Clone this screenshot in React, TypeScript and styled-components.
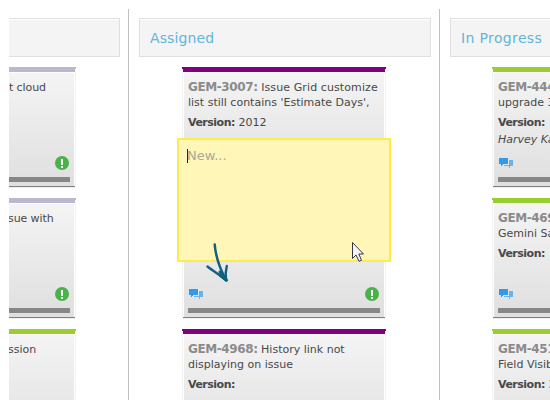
import React from "react";
import styled, { createGlobalStyle } from "styled-components";

const GlobalStyle = createGlobalStyle`
  body {
    margin: 0;
    background: #fff;
    font-family: "DejaVu Sans", Verdana, sans-serif;
    color: #484848;
    overflow: hidden;
  }
`;

const Page = styled.main`
  position: relative;
  box-sizing: border-box;
  width: 550px;
  height: 400px;
  padding: 9px 0 0 9px;
  overflow: hidden;
`;

const Board = styled.div`
  display: flex;
  height: 391px;
  overflow: hidden;
`;

const Column = styled.section<{ $pull?: number }>`
  box-sizing: border-box;
  flex: 0 0 311px;
  height: 391px;
  margin-left: ${(p) => -(p.$pull ?? 0)}px;
  padding: 9px 8px 0 10px;
  border-left: 1px solid #c0c0c0;
`;

const ColumnHeader = styled.h2<{ $spacing?: number }>`
  box-sizing: border-box;
  height: 39px;
  margin: 0 0 10px;
  padding: 0 10px;
  border: 1px solid #dfdfdf;
  background: #f4f4f4;
  box-shadow: inset 0 1px #fff;
  color: #62b5db;
  font-size: 14px;
  font-weight: 400;
  line-height: 38px;
  letter-spacing: ${(p) => p.$spacing ?? 0}px;
  white-space: nowrap;
`;

const Cards = styled.div<{ $inset: number }>`
  display: flex;
  flex-direction: column;
  gap: 10px;
  width: 204px;
  margin-left: ${(p) => p.$inset}px;
`;

const CardFrame = styled.article`
  flex: none;
  height: 121px;
`;

const Stripe = styled.div<{ $color: string }>`
  height: 3px;
  margin: 0 1px;
  padding-bottom: 2px;
  background: ${(p) => p.$color};
  &::before {
    content: "";
    display: block;
    height: 2px;
    margin: 0 -1px;
    background: ${(p) => p.$color};
  }
`;

const CardBody = styled.div`
  box-sizing: border-box;
  display: flex;
  flex-direction: column;
  height: 114px;
  padding: 7px 4px 4px;
  border: 1px solid #fff;
  border-bottom: 0;
  margin: 0 1px;
  background: linear-gradient(#f4f4f4, #dfdfdf) padding-box;
  box-shadow: -1px 0 #f2f2f2, 1px 0 #f2f2f2, 0 1px #808080, 0 2px #efefef;
`;

const Line = styled.div<{ $indent?: number; $spacing?: number }>`
  height: 15px;
  padding-left: ${(p) => p.$indent ?? 0}px;
  font-size: 11px;
  line-height: 15px;
  letter-spacing: ${(p) => p.$spacing ?? 0}px;
  white-space: nowrap;
`;

const IssueKey = styled.strong`
  color: #8b8b8b;
  font-size: 12px;
  letter-spacing: -0.4px;
`;

const Meta = styled(Line)`
  margin-top: 5px;
  strong {
    letter-spacing: -0.5px;
  }
`;

const Assignee = styled(Line)`
  margin-top: 2px;
  font-style: italic;
`;

const CardFooter = styled.footer`
  display: flex;
  justify-content: space-between;
  align-items: center;
  height: 14px;
  margin: auto 1px 7px;
`;

const Progress = styled.div`
  flex: none;
  height: 5px;
  background: #878787;
`;

const Composer = styled.div`
  position: absolute;
  left: 177px;
  top: 138px;
  box-sizing: border-box;
  width: 214px;
  height: 124px;
  padding: 8px;
  border: 2px solid #ffeb50;
  background: #fff6b8;
  color: #aaa69c;
  font-size: 13px;
  line-height: 15px;
`;

const Caret = styled.span`
  display: inline-block;
  width: 1px;
  height: 14px;
  margin-right: -1px;
  background: #222;
  vertical-align: -3px;
`;

const Overlay = styled.svg<{ $x: number; $y: number }>`
  position: absolute;
  left: ${(p) => p.$x}px;
  top: ${(p) => p.$y}px;
`;

const ChatIcon = () => (
  <svg width="14" height="10" viewBox="0 0 14 10" shapeRendering="crispEdges">
    <path fill="#6bb1ea" d="M10 2h4v6h-3v2h-1V8H5V7h5z" />
    <path fill="#3399eb" d="M0 0h9v6H4v1H3v1H2V6H0z" />
  </svg>
);

const AlertIcon = () => (
  <svg width="14" height="14" viewBox="0 0 14 14">
    <circle cx="7" cy="7" r="7" fill="#49b249" />
    <path fill="#fff" d="M6 3h2v6H6zM6 10h2v2H6z" />
  </svg>
);

type CardProps = {
  color: string;
  issue?: string;
  first?: string;
  second?: string;
  indent?: number;
  spacing?: number;
  version?: string;
  assignee?: string;
  chat?: boolean;
  alert?: boolean;
};

const Card = ({ color, issue, first, second, indent, spacing, version, assignee, chat, alert }: CardProps) => (
  <CardFrame>
    <Stripe $color={color} />
    <CardBody>
      <Line $indent={indent} $spacing={spacing}>
        {issue && <IssueKey>{issue}</IssueKey>} {first}
      </Line>
      {second && <Line>{second}</Line>}
      {version !== undefined && (
        <Meta>
          <strong>Version:</strong> {version}
        </Meta>
      )}
      {assignee && <Assignee>{assignee}</Assignee>}
      <CardFooter>
        {chat ? <ChatIcon /> : <span />}
        {alert && <AlertIcon />}
      </CardFooter>
      <Progress />
    </CardBody>
  </CardFrame>
);

const LILAC = "#bab7ce";
const GREEN = "#9acd32";
const PURPLE = "#800080";

export default function App() {
  return (
    <>
      <GlobalStyle />
      <Page>
        <Board>
          <Column $pull={192}>
            <ColumnHeader />
            <Cards $inset={44}>
              <Card color={LILAC} indent={131} spacing={-0.1} first="t cloud" alert />
              <Card color={LILAC} indent={130} spacing={-0.1} first="sue with" alert />
              <Card color={GREEN} indent={130} first="ssion" alert />
            </Cards>
          </Column>
          <Column>
            <ColumnHeader $spacing={0.12}>Assigned</ColumnHeader>
            <Cards $inset={43}>
              <Card color={PURPLE} issue="GEM-3007:" spacing={0.1} first="Issue Grid customize" second="list still contains 'Estimate Days'," version="2012" />
              <Card color={PURPLE} chat alert />
              <Card color={PURPLE} issue="GEM-4968:" first="History link not" second="displaying on issue" version="" />
            </Cards>
          </Column>
          <Column>
            <ColumnHeader $spacing={0.36}>In Progress</ColumnHeader>
            <Cards $inset={42}>
              <Card color={GREEN} issue="GEM-444" second="upgrade 3" version="" assignee="Harvey Ka" chat />
              <Card color={GREEN} issue="GEM-469" second="Gemini Sa" version="" chat />
              <Card color={GREEN} issue="GEM-451" second="Field Visib" version="3" />
            </Cards>
          </Column>
        </Board>
        <Composer>
          <Caret />New...
        </Composer>
        <Overlay $x={204} $y={241} width="26" height="44" fill="none" stroke="#12607f" strokeLinecap="round" strokeLinejoin="round">
          <path strokeWidth="2.5" d="M10.7 3.5C11.5 13 15 26 22 39" />
          <path strokeWidth="2.4" d="M3.5 25.5C9 30 16 34 22 39" />
          <path strokeWidth="2.4" d="M22 39C21.3 34 21.5 30 22.8 25" />
          <path strokeWidth="3" d="M16 31L22.5 39.2L16.5 34.5" />
        </Overlay>
        <Overlay $x={351} $y={241} width="14" height="22">
          <path
            d="M1.5 1.5V17.5L5 14L8 20.3L10.5 19.2L7.8 13H12.5Z"
            fill="#f4f4fa"
            stroke="#363640"
            strokeWidth="1"
          />
        </Overlay>
      </Page>
    </>
  );
}
